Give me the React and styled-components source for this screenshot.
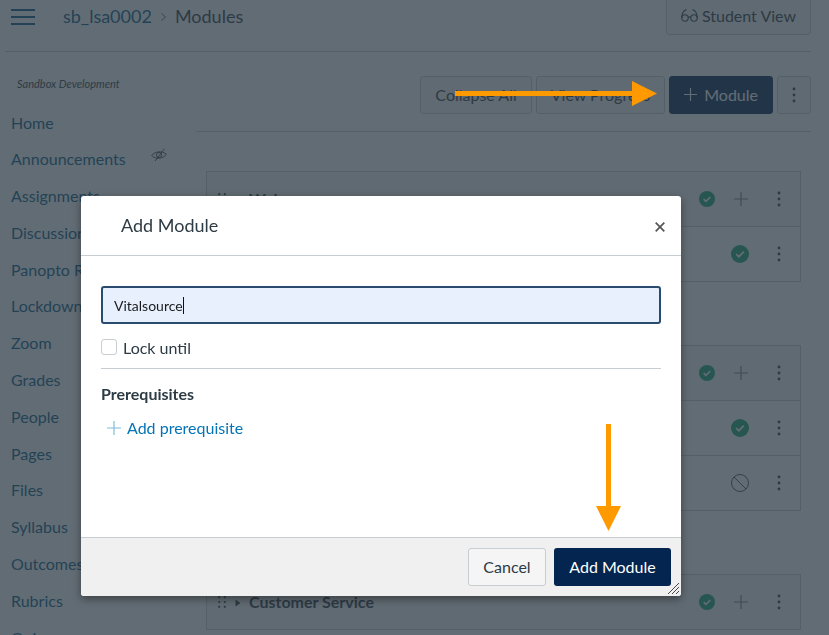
import React from 'react'
import styled, { createGlobalStyle } from 'styled-components'

const NAV_ITEMS = [
  'Home', 'Announcements', 'Assignments', 'Discussions', 'Panopto Recordings', 'Lockdown Browser', 'Zoom',
  'Grades', 'People', 'Pages', 'Files', 'Syllabus', 'Outcomes', 'Rubrics', 'Quizzes',
]

const Kebab = () => (
  <svg width="4" height="16" viewBox="0 0 4 16" fill="currentColor">
    <circle cx="2" cy="2" r="1.4" />
    <circle cx="2" cy="8" r="1.4" />
    <circle cx="2" cy="14" r="1.4" />
  </svg>
)

const Plus = ({ size = 14, weight = 1.2 }) => (
  <svg width={size} height={size} viewBox="0 0 14 14" stroke="currentColor" strokeWidth={weight} fill="none">
    <path d="M7 0v14M0 7h14" />
  </svg>
)

const CheckCircle = ({ size }) => (
  <svg width={size} height={size} viewBox="0 0 18 18">
    <circle cx="9" cy="9" r="9" fill="#16a870" />
    <path d="M5.2 9.2l2.6 2.5 5-5" fill="none" stroke="#fff" strokeWidth="1.8" />
  </svg>
)

const Blocked = () => (
  <svg width="18" height="18" viewBox="0 0 18 18" fill="none" stroke="currentColor" strokeWidth="0.9">
    <circle cx="9" cy="9" r="8.5" />
    <path d="M3 3l12 12" />
  </svg>
)

const Grip = () => (
  <svg width="8" height="12" viewBox="0 0 8 12" fill="currentColor">
    {[1.2, 6.8].map(x => [1.2, 6, 10.8].map(y => <circle key={`${x}${y}`} cx={x} cy={y} r="1.1" />))}
  </svg>
)

const Caret = () => (
  <CaretIcon width="6" height="8" viewBox="0 0 6 8" fill="currentColor">
    <path d="M0.5 0.5L5.5 4L0.5 7.5z" />
  </CaretIcon>
)

const Glasses = () => (
  <svg width="17" height="15" viewBox="0 0 17 15" fill="none" stroke="currentColor" strokeWidth="1.1">
    <circle cx="4" cy="10" r="3.2" />
    <circle cx="13" cy="10" r="3.2" />
    <path d="M7 9.4c1-.7 2-.7 3 0M0.8 10C0.8 6 2.4 2.6 5.4 1.4M16.2 10C16.2 6 14.6 2.6 11.6 1.4" />
  </svg>
)

const EyeOff = () => (
  <svg width="16" height="14" viewBox="0 0 16 14" fill="none" stroke="currentColor" strokeWidth="0.9">
    <path d="M0.6 7.5C4 3.2 11 2.6 15.4 6.2 12.4 10.8 4.6 11.8 0.6 7.5z" />
    <circle cx="8" cy="7" r="2.6" />
    <path d="M4 13L13.5 0.8" />
  </svg>
)

const App = () => {
  return (
    <>
      <GlobalStyle />
      <Page>
        <TopBar>
          <Burger>
            <span />
            <span />
            <span />
          </Burger>
          <Crumb>sb_lsa0002</Crumb>
          <CrumbArrow width="5" height="8" viewBox="0 0 5 8" fill="none" stroke="currentColor" strokeWidth="0.8">
            <path d="M0.5 0.5L4.5 4L0.5 7.5" />
          </CrumbArrow>
          <CrumbCurrent>Modules</CrumbCurrent>
          <StudentView>
            <Glasses />
            Student View
          </StudentView>
        </TopBar>
        <Body>
          <Sidebar>
            <Term>Sandbox Development</Term>
            {NAV_ITEMS.map(item => (
              <NavLink key={item}>
                {item}
                {item === 'Announcements' && <NavIcon><EyeOff /></NavIcon>}
              </NavLink>
            ))}
          </Sidebar>
          <Main>
            <Toolbar>
              <ToolButton>Collapse All</ToolButton>
              <ToolButton>View Progress</ToolButton>
              <ToolButton $primary>
                <Plus size={13} />
                Module
              </ToolButton>
              <ToolButton $square><Kebab /></ToolButton>
            </Toolbar>
            <Groups>
              <Group>
                <Row $head>
                  <Grip />
                  <Caret />
                  <GroupTitle>Welcome</GroupTitle>
                  <Actions>
                    <Slot><CheckCircle size={16} /></Slot>
                    <Slot $muted><Plus /></Slot>
                    <KebabSlot><Kebab /></KebabSlot>
                  </Actions>
                </Row>
                <Row>
                  <Actions>
                    <Slot $status><CheckCircle size={18} /></Slot>
                    <KebabSlot><Kebab /></KebabSlot>
                  </Actions>
                </Row>
              </Group>
              <Group>
                <Row $head>
                  <Actions>
                    <Slot><CheckCircle size={16} /></Slot>
                    <Slot $muted><Plus /></Slot>
                    <KebabSlot><Kebab /></KebabSlot>
                  </Actions>
                </Row>
                <Row>
                  <Actions>
                    <Slot $status><CheckCircle size={18} /></Slot>
                    <KebabSlot><Kebab /></KebabSlot>
                  </Actions>
                </Row>
                <Row>
                  <Actions>
                    <Slot $status><Blocked /></Slot>
                    <KebabSlot><Kebab /></KebabSlot>
                  </Actions>
                </Row>
              </Group>
              <Group>
                <Row $head>
                  <Grip />
                  <Caret />
                  <GroupTitle>Customer Service</GroupTitle>
                  <Actions>
                    <Slot><CheckCircle size={16} /></Slot>
                    <Slot $muted><Plus /></Slot>
                    <KebabSlot><Kebab /></KebabSlot>
                  </Actions>
                </Row>
              </Group>
            </Groups>
          </Main>
        </Body>
      </Page>

      <Mask />

      <Dialog>
        <DialogHead>
          <DialogTitle>Add Module</DialogTitle>
          <CloseButton>
            <svg width="10" height="10" viewBox="0 0 10 10" stroke="currentColor" strokeWidth="1.7">
              <path d="M0.7 0.7l8.6 8.6M9.3 0.7L0.7 9.3" />
            </svg>
          </CloseButton>
        </DialogHead>
        <DialogBody>
          <NameField>
            Vitalsource
            <TextCaret />
          </NameField>
          <LockRow>
            <CheckBox />
            <LockLabel>Lock until</LockLabel>
          </LockRow>
          <Divider />
          <SectionLabel>Prerequisites</SectionLabel>
          <AddLink>
            <AddIcon><Plus /></AddIcon>
            Add prerequisite
          </AddLink>
        </DialogBody>
        <DialogFoot>
          <CancelButton>Cancel</CancelButton>
          <SubmitButton>Add Module</SubmitButton>
          <ResizeGrip width="13" height="13" viewBox="0 0 13 13" stroke="#333" strokeWidth="0.9">
            <path d="M1 12L12 1M5 12l7-7M9 12l3-3" />
          </ResizeGrip>
        </DialogFoot>
      </Dialog>

      {/* annotation arrows drawn on top of the screenshot */}
      <ArrowRight width="202" height="25" viewBox="0 0 202 25" fill="#ff9900">
        <path d="M0 10h177V0l25 12.5L177 25V15H0z" />
      </ArrowRight>
      <ArrowDown width="25" height="107" viewBox="0 0 25 107" fill="#ff9900">
        <path d="M10 0h5v82h10l-12.5 25L0 82h10z" />
      </ArrowDown>
    </>
  )
}

export default App

const GlobalStyle = createGlobalStyle`
html, body {
  margin: 0;
  height: 100%;
  overflow: hidden;
  background: #fff;
}
body {
  font-family: Lato, "Liberation Sans", sans-serif;
  color: #2d3b45;
}
* {
  box-sizing: border-box;
}
`

const Page = styled.div`
width: 829px;
height: 635px;
overflow: hidden;
padding-right: 18px;
`

const TopBar = styled.div`
display: flex;
align-items: center;
height: 52px;
margin-left: 5px;
padding: 0 0 20px 6px;
border-bottom: 1px solid #c7cdd1;
`

const Burger = styled.div`
display: flex;
flex-direction: column;
justify-content: space-between;
width: 24px;
height: 16px;
margin: 2px 28px 0 0;
span {
  display: block;
  height: 2px;
  background: #045a85;
}
`

const Crumb = styled.span`
font-size: 18px;
color: #045a85;
`

const CrumbArrow = styled.svg`
margin: 2px 9px 0 9px;
color: #2d3b45;
`

const CrumbCurrent = styled.span`
font-size: 18px;
`

const StudentView = styled.div`
display: flex;
align-items: center;
gap: 4px;
height: 38px;
margin-left: auto;
padding: 0 14px 0 14px;
flex-shrink: 0;
font-size: 16px;
background: #f5f5f5;
border: 1px solid #c7cdd1;
border-radius: 3px;
`

const Body = styled.div`
display: flex;
`

const Sidebar = styled.nav`
width: 196px;
flex-shrink: 0;
padding: 26px 0 0 11px;
`

const Term = styled.div`
margin: 0 0 14.5px 6px;
font-size: 11px;
line-height: 12px;
font-style: italic;
`

const NavLink = styled.div`
position: relative;
height: 36.8px;
line-height: 36.8px;
font-size: 16px;
color: #045a85;
white-space: nowrap;
`

const NavIcon = styled.span`
position: absolute;
left: 140px;
top: -3px;
color: #2d3b45;
`

const Main = styled.div`
flex: 1;
min-width: 0;
`

const Toolbar = styled.div`
display: flex;
justify-content: flex-end;
gap: 4px;
height: 80px;
padding-top: 24px;
border-bottom: 1px solid #c7cdd1;
`

const ToolButton = styled.div`
display: flex;
align-items: center;
justify-content: center;
gap: 7px;
height: 38px;
padding: 0 14px 1px;
font-size: 16px;
color: ${p => (p.$primary ? '#fff' : '#2d3b45')};
background: ${p => (p.$primary ? '#03254f' : '#f5f5f5')};
border: 1px solid ${p => (p.$primary ? '#03254f' : '#c7cdd1')};
border-radius: 3px;
${p => p.$square && 'width: 34px; padding: 0;'}
`

const Groups = styled.div`
display: flex;
flex-direction: column;
gap: 63px;
margin: 39px 10px 0;
`

const Group = styled.div`
border: 1px solid #c7cdd1;
`

const Row = styled.div`
display: flex;
align-items: center;
gap: 9px;
height: 54px;
padding-left: 11px;
background: ${p => (p.$head ? '#f5f5f5' : '#fff')};
& + & {
  height: 55px;
  border-top: 1px solid #c7cdd1;
}
`

const CaretIcon = styled.svg`
margin-top: 1px;
`

const GroupTitle = styled.span`
margin: -2px 0 0 -1px;
font-size: 16px;
font-weight: 700;
`

const Actions = styled.div`
display: flex;
align-items: center;
margin-left: auto;
`

const Slot = styled.div`
display: flex;
align-items: center;
justify-content: center;
width: 34px;
padding-right: ${p => (p.$status ? '2px' : '0')};
color: ${p => (p.$muted ? '#73818c' : '#2d3b45')};
`

const KebabSlot = styled.div`
display: flex;
justify-content: center;
width: 42px;
`

const Mask = styled.div`
position: fixed;
inset: 0;
background: rgba(45, 59, 69, 0.75);
`

const Dialog = styled.div`
position: fixed;
left: 81px;
top: 196px;
display: flex;
flex-direction: column;
width: 600px;
height: 400px;
background: #fff;
border-radius: 3px;
box-shadow: 0 3px 8px rgba(0, 0, 0, 0.4);
`

const DialogHead = styled.div`
display: flex;
align-items: center;
justify-content: space-between;
height: 60px;
padding: 0 16px 2px 40px;
border-bottom: 1px solid #c7cdd1;
`

const DialogTitle = styled.div`
font-size: 18px;
`

const CloseButton = styled.div`
display: flex;
margin-top: 4px;
color: #555;
`

const DialogBody = styled.div`
flex: 1;
padding: 30px 20px 0;
`

const NameField = styled.div`
display: flex;
align-items: center;
height: 38px;
padding-left: 11px;
font-size: 14px;
color: #1b1b1b;
background: #e8f0fd;
border: 2px solid #2a4b6e;
border-radius: 3px;
`

const TextCaret = styled.span`
width: 1px;
height: 17px;
background: #111;
`

const LockRow = styled.div`
display: flex;
align-items: center;
gap: 6px;
height: 16px;
margin-top: 15px;
font-size: 16px;
line-height: 18px;
`

const LockLabel = styled.span`
margin-top: 2px;
`

const CheckBox = styled.span`
width: 16px;
height: 16px;
background: #fff;
border: 1px solid #c7cdd1;
border-radius: 3px;
`

const Divider = styled.div`
margin-top: 13px;
border-top: 1px solid #c7cdd1;
`

const SectionLabel = styled.div`
margin-top: 15px;
font-size: 16px;
line-height: 19px;
font-weight: 700;
`

const AddLink = styled.div`
display: flex;
align-items: center;
gap: 6px;
margin: 15px 0 0 6px;
font-size: 16px;
line-height: 20px;
color: #0374b5;
`

const AddIcon = styled.span`
display: flex;
color: #7fbbdd;
`

const DialogFoot = styled.div`
position: relative;
display: flex;
justify-content: flex-end;
align-items: center;
gap: 8px;
height: 59px;
padding: 0 10px 0 0;
background: #f0f0f0;
border-top: 1px solid #c7cdd1;
border-radius: 0 0 3px 3px;
`

const CancelButton = styled.div`
display: flex;
align-items: center;
justify-content: center;
width: 78px;
height: 38px;
padding-bottom: 1px;
font-size: 16px;
background: #f5f5f5;
border: 1px solid #c7cdd1;
border-radius: 3px;
`

const SubmitButton = styled.div`
display: flex;
align-items: center;
justify-content: center;
width: 117px;
height: 38px;
padding-bottom: 1px;
font-size: 16px;
color: #fff;
background: #03254f;
border-radius: 3px;
`

const ResizeGrip = styled.svg`
position: absolute;
right: 1px;
bottom: 1px;
`

const ArrowRight = styled.svg`
position: fixed;
left: 455px;
top: 81px;
`

const ArrowDown = styled.svg`
position: fixed;
left: 596px;
top: 424px;
`
